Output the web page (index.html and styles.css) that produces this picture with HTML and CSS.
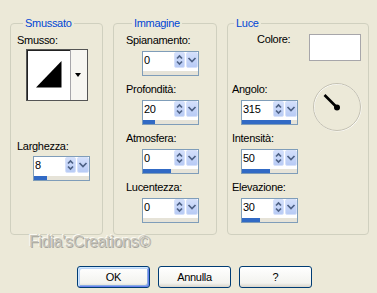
FILE: index.html
```html
<!DOCTYPE html>
<html lang="it">
<head>
    <meta charset="UTF-8">
    <meta name="viewport" content="width=device-width, initial-scale=1.0">
    <title>Smusso interno</title>
    <link rel="stylesheet" href="styles.css">
</head>
<body>
    <div class="dialog">
        <div class="groups">
            <fieldset class="group group-bevel">
                <legend>Smussato</legend>
                <div class="label">Smusso:</div>
                <div class="combo">
                    <div class="combo-preview">
                        <svg width="43" height="50" viewBox="0 0 43 50">
                            <polygon points="9,37.5 34.5,37.5 34.5,11" fill="#000"/>
                        </svg>
                    </div>
                    <div class="combo-btn"><span class="combo-arrow"></span></div>
                </div>
                <div class="label label-width">Larghezza:</div>
                <div class="spin">
                    <div class="spin-row">
                        <span class="spin-value">8</span>
                        <span class="spin-updown"><svg width="11" height="16"><path d="M3 6.5l2.5-2.5 2.5 2.5M3 9.5l2.5 2.5 2.5-2.5"/></svg></span>
                        <span class="spin-drop"><svg width="12" height="16"><path d="M2.5 6l3.5 3.5 3.5-3.5"/></svg></span>
                    </div>
                    <div class="spin-bar"><div class="spin-fill" style="width: 13px"></div></div>
                </div>
            </fieldset>

            <fieldset class="group group-image">
                <legend>Immagine</legend>
                <div class="field">
                    <div class="label">Spianamento:</div>
                    <div class="spin">
                        <div class="spin-row">
                            <span class="spin-value">0</span>
                            <span class="spin-updown"><svg width="11" height="16"><path d="M3 6.5l2.5-2.5 2.5 2.5M3 9.5l2.5 2.5 2.5-2.5"/></svg></span>
                            <span class="spin-drop"><svg width="12" height="16"><path d="M2.5 6l3.5 3.5 3.5-3.5"/></svg></span>
                        </div>
                        <div class="spin-bar"><div class="spin-fill" style="width: 0px"></div></div>
                    </div>
                </div>
                <div class="field">
                    <div class="label">Profondità:</div>
                    <div class="spin">
                        <div class="spin-row">
                            <span class="spin-value">20</span>
                            <span class="spin-updown"><svg width="11" height="16"><path d="M3 6.5l2.5-2.5 2.5 2.5M3 9.5l2.5 2.5 2.5-2.5"/></svg></span>
                            <span class="spin-drop"><svg width="12" height="16"><path d="M2.5 6l3.5 3.5 3.5-3.5"/></svg></span>
                        </div>
                        <div class="spin-bar"><div class="spin-fill" style="width: 12px"></div></div>
                    </div>
                </div>
                <div class="field">
                    <div class="label">Atmosfera:</div>
                    <div class="spin">
                        <div class="spin-row">
                            <span class="spin-value">0</span>
                            <span class="spin-updown"><svg width="11" height="16"><path d="M3 6.5l2.5-2.5 2.5 2.5M3 9.5l2.5 2.5 2.5-2.5"/></svg></span>
                            <span class="spin-drop"><svg width="12" height="16"><path d="M2.5 6l3.5 3.5 3.5-3.5"/></svg></span>
                        </div>
                        <div class="spin-bar"><div class="spin-fill" style="width: 28px"></div></div>
                    </div>
                </div>
                <div class="field">
                    <div class="label">Lucentezza:</div>
                    <div class="spin">
                        <div class="spin-row">
                            <span class="spin-value">0</span>
                            <span class="spin-updown"><svg width="11" height="16"><path d="M3 6.5l2.5-2.5 2.5 2.5M3 9.5l2.5 2.5 2.5-2.5"/></svg></span>
                            <span class="spin-drop"><svg width="12" height="16"><path d="M2.5 6l3.5 3.5 3.5-3.5"/></svg></span>
                        </div>
                        <div class="spin-bar"><div class="spin-fill" style="width: 0px"></div></div>
                    </div>
                </div>
            </fieldset>

            <fieldset class="group group-light">
                <legend>Luce</legend>
                <div class="color-row">
                    <div class="label">Colore:</div>
                    <div class="swatch"></div>
                </div>
                <div class="light-body">
                    <div class="light-fields">
                        <div class="field">
                            <div class="label">Angolo:</div>
                            <div class="spin">
                                <div class="spin-row">
                                    <span class="spin-value">315</span>
                                    <span class="spin-updown"><svg width="11" height="16"><path d="M3 6.5l2.5-2.5 2.5 2.5M3 9.5l2.5 2.5 2.5-2.5"/></svg></span>
                                    <span class="spin-drop"><svg width="12" height="16"><path d="M2.5 6l3.5 3.5 3.5-3.5"/></svg></span>
                                </div>
                                <div class="spin-bar"><div class="spin-fill" style="width: 49px"></div></div>
                            </div>
                        </div>
                        <div class="field">
                            <div class="label">Intensità:</div>
                            <div class="spin">
                                <div class="spin-row">
                                    <span class="spin-value">50</span>
                                    <span class="spin-updown"><svg width="11" height="16"><path d="M3 6.5l2.5-2.5 2.5 2.5M3 9.5l2.5 2.5 2.5-2.5"/></svg></span>
                                    <span class="spin-drop"><svg width="12" height="16"><path d="M2.5 6l3.5 3.5 3.5-3.5"/></svg></span>
                                </div>
                                <div class="spin-bar"><div class="spin-fill" style="width: 28px"></div></div>
                            </div>
                        </div>
                        <div class="field">
                            <div class="label">Elevazione:</div>
                            <div class="spin">
                                <div class="spin-row">
                                    <span class="spin-value">30</span>
                                    <span class="spin-updown"><svg width="11" height="16"><path d="M3 6.5l2.5-2.5 2.5 2.5M3 9.5l2.5 2.5 2.5-2.5"/></svg></span>
                                    <span class="spin-drop"><svg width="12" height="16"><path d="M2.5 6l3.5 3.5 3.5-3.5"/></svg></span>
                                </div>
                                <div class="spin-bar"><div class="spin-fill" style="width: 18px"></div></div>
                            </div>
                        </div>
                    </div>
                    <div class="dial">
                        <svg width="49" height="49" viewBox="0 0 49 49">
                            <circle cx="24.5" cy="24.5" r="23.5" fill="none" stroke="#fff" stroke-width="1"/>
                            <circle cx="24" cy="24" r="23.5" fill="none" stroke="#c4c1b2" stroke-width="1"/>
                            <line x1="11.5" y1="12" x2="24" y2="24.5" stroke="#000" stroke-width="2.6"/>
                            <circle cx="24" cy="24.5" r="3" fill="#000"/>
                        </svg>
                    </div>
                </div>
            </fieldset>
        </div>

        <div class="watermark">Fidia'sCreations©</div>

        <div class="buttons">
            <button class="btn btn-default" type="button">OK</button>
            <button class="btn" type="button">Annulla</button>
            <button class="btn" type="button">?</button>
        </div>
    </div>
</body>
</html>
```

FILE: styles.css
```css
* {
    margin: 0;
    padding: 0;
    box-sizing: border-box;
}

body {
    background: #ECE9D8;
    font-family: "Liberation Sans", Arial, sans-serif;
    font-size: 11px;
    letter-spacing: -0.3px;
    color: #000;
}

.dialog {
    width: 377px;
    height: 293px;
    overflow: hidden;
}

.groups {
    display: flex;
    gap: 10px;
    padding: 17px 0 0 10px;
}

.group {
    height: 218px;
    min-width: 0;
    border: 1px solid #D0D0BF;
    border-radius: 4px;
    padding: 4px 0 0 6px;
}

.group legend {
    margin-left: 6px;
    padding: 0 2px;
    line-height: 13px;
    color: #0046D5;
}

.group-bevel {
    width: 93px;
}

.group-image {
    width: 104px;
    padding-left: 12px;
}

.group-light {
    width: 142px;
    padding-left: 0;
}

.label {
    line-height: 13px;
}

/* Smusso preview combo */
.combo {
    display: flex;
    width: 62px;
    height: 52px;
    margin: 2px 0 0 9px;
    border: 1px solid #555;
    box-shadow: inset 1px 1px 0 #222;
    background: #fff;
}

.combo-preview {
    flex: 1;
}

.combo-preview svg {
    display: block;
}

.combo-btn {
    width: 17px;
    border-left: 1px solid #A7A6AA;
    background: #F7F6F1;
    display: flex;
    justify-content: center;
    align-items: center;
}

.combo-arrow {
    width: 0;
    height: 0;
    margin-left: -2px;
    border-left: 3.5px solid transparent;
    border-right: 3.5px solid transparent;
    border-top: 4px solid #000;
}

.label-width {
    margin-top: 39px;
}

.group-bevel .spin {
    margin-top: 3px;
}

/* Spin controls */
.field + .field {
    margin-top: 7px;
}

.spin {
    width: 57px;
    height: 25px;
    margin: 4px 0 0 16px;
    border: 1px solid #7F9DB9;
    background: #fff;
}

.spin-row {
    display: flex;
    height: 16px;
}

.spin-value {
    flex: 1;
    padding-left: 1px;
    line-height: 16px;
}

.spin-updown,
.spin-drop {
    display: block;
    height: 16px;
    border: 1px solid #D6E1FA;
    border-radius: 2px;
    background: linear-gradient(#D3DFFB, #B8CBF5);
}

.spin-updown {
    width: 11px;
}

.spin-drop {
    width: 12px;
    margin-left: 1px;
}

.spin-row svg {
    display: block;
    margin: -1px 0 0 -1px;
    fill: none;
    stroke: #4D6185;
    stroke-width: 1.7;
}

.spin-bar {
    height: 4px;
    margin-top: 3px;
    background: #E6E3D8;
}

.spin-fill {
    height: 100%;
    background: #316AC5;
}

/* Luce */
.color-row {
    display: flex;
    margin: -1px 0 0 29px;
}

.swatch {
    width: 52px;
    height: 27px;
    margin: 1px 0 0 19px;
    border: 1px solid #A7A6AA;
    background: #fff;
}

.light-body {
    display: flex;
    margin-top: 22px;
}

.light-fields {
    padding-left: 4px;
}

.light-fields .spin {
    margin-left: 9px;
}

.dial {
    margin-left: 15px;
}

.dial svg {
    display: block;
}

.watermark {
    margin-left: 29px;
    font-size: 16px;
    line-height: 14px;
    color: #C6C4BA;
    text-shadow: 1px 1px 0 #A8A69E, -1px -1px 0 #FAF9F3;
}

.buttons {
    display: flex;
    gap: 8px;
    margin: 17px 0 0 77px;
}

.btn {
    width: 73px;
    height: 22px;
    border: 1px solid #003C74;
    border-radius: 3px;
    background: linear-gradient(#FFFFFF, #F3F3EF 80%, #D8D4CA);
    font-family: "Liberation Sans", Arial, sans-serif;
    font-size: 11px;
    letter-spacing: -0.3px;
    color: #000;
}

.btn-default {
    box-shadow: inset 1px 1px 0 #CEE7FF, inset -1px -1px 0 #6982EE, inset 2px 2px 0 #BCD4F6, inset -2px -2px 0 #89ADE4;
}
```
